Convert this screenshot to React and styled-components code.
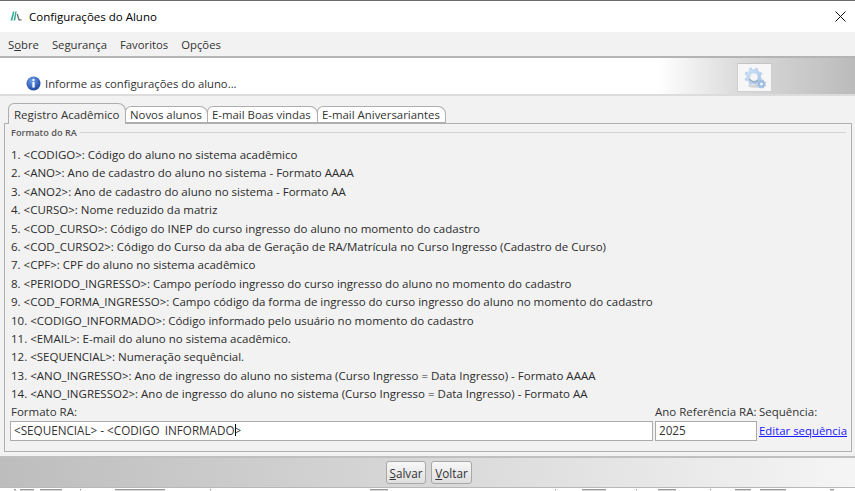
import React from "react";
import styled, { createGlobalStyle } from "styled-components";

const Global = createGlobalStyle`
  html, body { margin: 0; padding: 0; background: #f2f2f2; }
  body { width: 855px; height: 491px; overflow: hidden; font-family: "Open Sans", "Noto Sans", sans-serif; font-size: 12px; color: #262626; }
  #root { height: 491px; }
`;
const Win = styled.div`display:flex;flex-direction:column;height:491px;width:855px;border-top:1px solid #6a6a6a;box-sizing:border-box;background:#f2f2f2;`;
const TitleBar = styled.div`height:31px;box-sizing:border-box;background:#fff;display:flex;align-items:center;padding:0 9px 1px 10px;flex:none;`;
const Title = styled.div`margin-left:7px;font-size:11.5px;color:#000;flex:1;`;
const Menu = styled.div`height:24px;flex:none;display:flex;align-items:center;gap:13px;padding:0 8px;background:#f2f2f2;border-bottom:2px solid #b4b4b4;`;
const MenuItem = styled.span`font-size:11.3px;color:#333;`;
const Header = styled.div`height:38px;flex:none;box-sizing:border-box;display:flex;align-items:flex-end;padding:0 0 3px 26px;position:relative;border-bottom:2px solid #dcdcdc;background:linear-gradient(90deg,#fff 0,#fff 77%,#dcdcdc 86%,#bbb 100%);`;
const HeadText = styled.span`margin-left:4px;font-size:11.3px;color:#333;`;
const ConfigBtn = styled.div`position:absolute;left:737px;top:5px;width:35px;height:29px;box-sizing:border-box;background:#f7f7f7;border:1px solid #cfcfd4;border-top-color:#c4c4c8;display:flex;align-items:center;justify-content:center;`;
const GearArt = styled.svg`filter:blur(0.45px);`;
const Body = styled.div`flex:1;min-height:0;padding:7px 3px 4px 4px;display:flex;flex-direction:column;background:#f2f2f2;`;
const Tabs = styled.div`display:flex;align-items:flex-end;height:21px;padding-left:4px;flex:none;`;
const Tab = styled.div`height:${p=>p.$active?21:18}px;box-sizing:border-box;padding:0 5px 0 ${p=>p.$active?5:4}px;margin-right:-1px;display:flex;align-items:center;font-size:${p=>p.$active?11.5:11.4}px;color:#333;background:${p=>p.$active?"#f2f2f2":"#fff"};border:1px solid #aeaeae;border-bottom:${p=>p.$active?"none":"2px solid #aeaeae"};border-radius:6px 8px 0 0;position:relative;z-index:${p=>p.$active?2:1};flex:none;width:${p=>p.$w}px;`;
const Panel = styled.div`flex:1;min-height:0;margin-top:-1px;border:1px solid #b0b0b0;padding:2px 5px 0 5px;display:flex;flex-direction:column;background:#f2f2f2;`;
const Legend = styled.div`display:flex;align-items:center;gap:3px;padding-left:2px;margin-left:-1px;font-size:9.2px;font-weight:600;color:#555;height:12px;&::after{content:"";flex:1;height:1px;background:#d2d2d2;}`;
const List = styled.div`margin-top:8px;display:flex;flex-direction:column;padding-left:1px;`;
const Line = styled.div`height:18.4px;line-height:18px;font-size:11.5px;white-space:nowrap;color:#2b2b2b;`;
const Grid = styled.div`display:grid;grid-template-columns:643px 102px auto;column-gap:2px;margin-top:0;`;
const Label = styled.div`font-size:11.5px;color:#333;height:18px;line-height:18px;white-space:nowrap;padding-left:${p=>p.$inset?1:0}px;`;
const Field = styled.div`height:18px;border:1px solid #ababab;background:#fff;padding:0 3px;line-height:17px;font-size:11.7px;color:#333;white-space:pre;overflow:hidden;`;
const Clip = styled.span`display:inline-block;height:14px;overflow:hidden;vertical-align:top;`;
const Caret = styled.span`display:inline-block;width:1px;height:14px;background:#000;vertical-align:-3px;margin-right:-1px;`;
const LinkText = styled.a`color:#1a1aff;font-size:11.4px;text-decoration:underline;line-height:19px;white-space:nowrap;`;
const Footer = styled.div`height:32px;flex:none;box-sizing:border-box;border-top:2px solid #c0c0c0;border-bottom:1px solid #b8b8b8;background:linear-gradient(90deg,#bdbdbd 0,#d8d8d8 50%,#f5f5f5 100%);display:flex;align-items:center;justify-content:center;gap:5px;padding-left:3px;`;
const Btn = styled.button`height:23px;width:${p=>p.$w}px;box-sizing:border-box;padding:0;border:1px solid #a8a8a8;border-radius:3px;background:linear-gradient(#f8f8f8,#dedede);font:11.7px "Open Sans",sans-serif;color:#333;`;
const Under = styled.span`text-decoration:underline;`;
const Strip = styled.div`flex:none;height:3px;background:#fff;line-height:0;overflow:hidden;`;

const lines = [
"1. <CODIGO>: Código do aluno no sistema acadêmico",
"2. <ANO>: Ano de cadastro do aluno no sistema - Formato AAAA",
"3. <ANO2>: Ano de cadastro do aluno no sistema - Formato AA",
"4. <CURSO>: Nome reduzido da matriz",
"5. <COD_CURSO>: Código do INEP do curso ingresso do aluno no momento do cadastro",
"6. <COD_CURSO2>: Código do Curso da aba de Geração de RA/Matrícula no Curso Ingresso (Cadastro de Curso)",
"7. <CPF>: CPF do aluno no sistema acadêmico",
"8. <PERIODO_INGRESSO>: Campo período ingresso do curso ingresso do aluno no momento do cadastro",
"9. <COD_FORMA_INGRESSO>: Campo código da forma de ingresso do curso ingresso do aluno no momento do cadastro",
"10. <CODIGO_INFORMADO>: Código informado pelo usuário no momento do cadastro",
"11. <EMAIL>: E-mail do aluno no sistema acadêmico.",
"12. <SEQUENCIAL>: Numeração sequêncial.",
"13. <ANO_INGRESSO>: Ano de ingresso do aluno no sistema (Curso Ingresso = Data Ingresso) - Formato AAAA",
"14. <ANO_INGRESSO2>: Ano de ingresso do aluno no sistema (Curso Ingresso = Data Ingresso) - Formato AA",
];

const Logo = () => (
  <svg width="12" height="10" viewBox="0 0 12 10">
    <path d="M0.5 9.5L3 0.5h1.6L2.3 9.5z" fill="#2fae96"/>
    <path d="M3.6 9.5L5.4 0.5h1.2L5.2 9.5z" fill="#3a9f8c"/>
    <path d="M7.2 3l1.8 5.8h2.6" fill="none" stroke="#5f6f70" strokeWidth="1.3"/>
  </svg>
);
const Info = () => (
  <svg width="15" height="15" viewBox="0 0 15 15">
    <defs><radialGradient id="ig" cx="0.4" cy="0.3" r="0.8"><stop offset="0" stopColor="#6f9fe8"/><stop offset="1" stopColor="#123c9c"/></radialGradient></defs>
    <circle cx="7.5" cy="7.5" r="7" fill="url(#ig)"/>
    <circle cx="7.5" cy="4" r="1.2" fill="#fff"/>
    <rect x="6.4" y="6" width="2.2" height="5.6" fill="#fff"/>
  </svg>
);
const Gear = ({ cx, cy, r, t, fill }) => (
  <g fill={fill}>
    {[0,1,2,3,4,5,6,7].map(i => (
      <rect key={i} x={cx - t/2} y={cy - r - t*0.55} width={t} height={t} transform={`rotate(${i*45+22} ${cx} ${cy})`} />
    ))}
    <circle cx={cx} cy={cy} r={r} />
  </g>
);
const Gears = () => (
  <GearArt width="31" height="25" viewBox="0 0 31 25">
    <defs>
      <linearGradient id="gg" x1="0" y1="0" x2="1" y2="1"><stop offset="0" stopColor="#d3e4f6"/><stop offset="1" stopColor="#a3c3e7"/></linearGradient>
    </defs>
    <ellipse cx="17" cy="21" rx="8" ry="1.8" fill="#d6d6d6"/>
    <Gear cx={14.5} cy={11.5} r={7.5} t={3.2} fill="url(#gg)"/>
    <circle cx="15" cy="12" r="3.8" fill="#f6f6f6"/>
    <path d="M10.5 14a5 5 0 0 0 8.5 1" stroke="#9aa6b3" strokeWidth="1.2" fill="none"/>
    <Gear cx={22.5} cy={19} r={3.5} t={1.8} fill="#9cbde2"/>
    <circle cx="22.5" cy="19" r="1.5" fill="#f0f4f8"/>
  </GearArt>
);
const Close = () => (
  <svg width="11" height="11" viewBox="0 0 11 11"><path d="M.5.5l10 10M10.5.5l-10 10" stroke="#111" strokeWidth="1" fill="none"/></svg>
);
const specks = [[14,2],[20,14],[40,22],[80,1],[115,50],[210,1],[370,18],[555,1],[582,24],[636,1],[658,18],[710,1],[735,16],[760,26],[830,4]];
const Specks = () => (
  <svg width="855" height="3" viewBox="0 0 855 3">
    {specks.map(([x,w]) => <rect key={x} x={x} y="0" width={w} height="1.4" fill="#999"/>)}
  </svg>
);

export default function App() {
  return (
    <Win>
      <Global />
      <TitleBar><Logo /><Title>Configurações do Aluno</Title><Close /></TitleBar>
      <Menu>
        <MenuItem>S<Under>o</Under>bre</MenuItem>
        <MenuItem>Segurança</MenuItem>
        <MenuItem>Favoritos</MenuItem>
        <MenuItem>Opções</MenuItem>
      </Menu>
      <Header>
        <Info /><HeadText>Informe as configurações do aluno...</HeadText>
        <ConfigBtn><Gears /></ConfigBtn>
      </Header>
      <Body>
        <Tabs>
          <Tab $active $w={118}>Registro Acadêmico</Tab>
          <Tab $w={83}>Novos alunos</Tab>
          <Tab $w={111}>E-mail Boas vindas</Tab>
          <Tab $w={129}>E-mail Aniversariantes</Tab>
        </Tabs>
        <Panel>
          <Legend>Formato do RA</Legend>
          <List>{lines.map(l => <Line key={l}>{l}</Line>)}</List>
          <Grid>
            <Label $inset>Formato RA:</Label>
            <Label>Ano Referência RA:</Label>
            <Label>Sequência:</Label>
            <Field><Clip>{"<SEQUENCIAL> - <CODIGO_INFORMADO"}<Caret />{">"}</Clip></Field>
            <Field>2025</Field>
            <LinkText>Editar sequência</LinkText>
          </Grid>
        </Panel>
      </Body>
      <Footer>
        <Btn $w={40}><Under>S</Under>alvar</Btn>
        <Btn $w={41}><Under>V</Under>oltar</Btn>
      </Footer>
      <Strip><Specks /></Strip>
    </Win>
  );
}
